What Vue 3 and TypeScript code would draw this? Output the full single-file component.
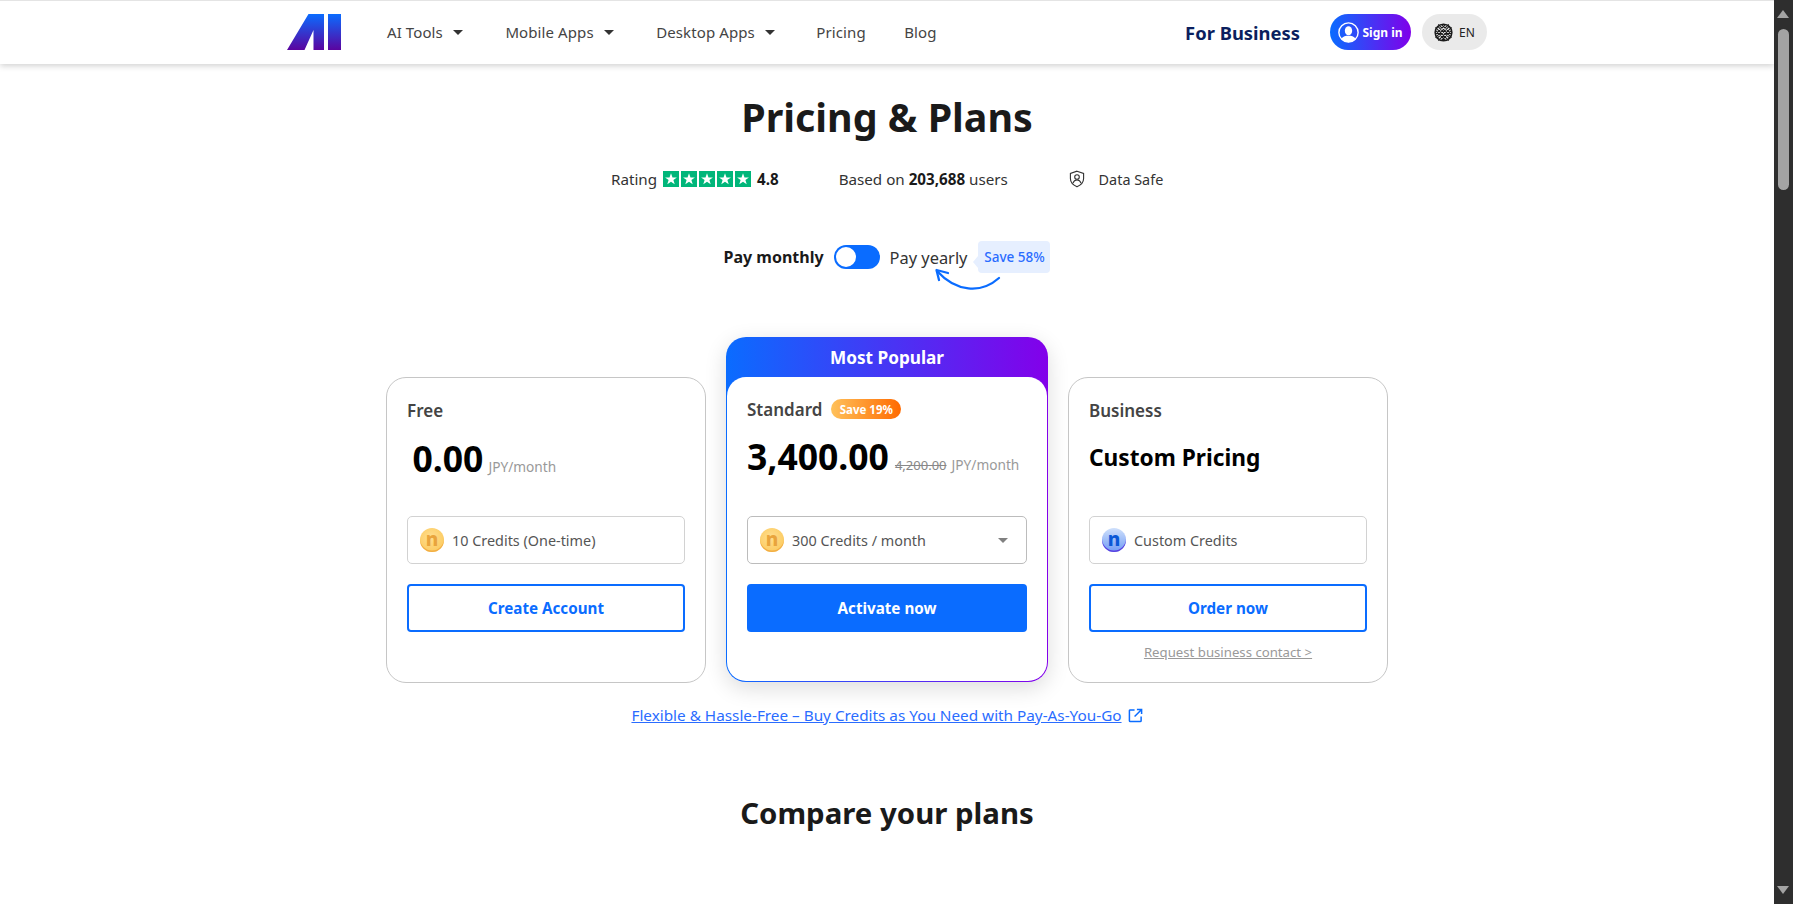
<script setup lang="ts">
const navItems = [
  { label: 'AI Tools', caret: true },
  { label: 'Mobile Apps', caret: true },
  { label: 'Desktop Apps', caret: true },
  { label: 'Pricing', caret: false },
  { label: 'Blog', caret: false },
]
const stars = [0, 1, 2, 3, 4]
</script>

<template>
  <div class="page">
    <div class="viewport">
      <header class="topbar">
        <div class="topbar-inner">
          <svg class="logo" viewBox="0 0 54 36" aria-label="AI">
            <defs>
              <linearGradient id="logoFill" x1="0" y1="0" x2="0" y2="1">
                <stop offset="0" stop-color="#0a6cff" />
                <stop offset="1" stop-color="#5b049f" />
              </linearGradient>
            </defs>
            <path d="M0 36 L21.500 0 H37 V36 H26.500 V16 L17.500 36 Z" fill="url(#logoFill)" />
            <rect x="41" y="0" width="13" height="36" fill="url(#logoFill)" />
          </svg>
          <nav class="nav">
            <a v-for="item in navItems" :key="item.label" class="nav-link">
              {{ item.label }}<i v-if="item.caret" class="caret"></i>
            </a>
          </nav>
          <a class="business">For Business</a>
          <button class="signin">
            <svg class="user" viewBox="0 0 24 24">
              <circle cx="12" cy="12" r="11" fill="none" stroke="#fff" stroke-width="1.6" />
              <ellipse cx="12" cy="10" rx="4.200" ry="5.200" fill="#fff" />
              <path d="M3.800 19.200c2-3.200 5-3.600 8.200-3.600s6.200.4 8.200 3.600A11 11 0 0 1 12 23a11 11 0 0 1-8.200-3.800z" fill="#fff" />
            </svg>
            Sign in
          </button>
          <button class="lang">
            <svg class="globe" viewBox="0 0 20 20" fill="none" stroke="#1a1a1a">
              <circle cx="10" cy="10" r="8.800" stroke-width="1.600" />
              <path d="M4 3.500 17 16.500M1.800 8 12 18.400M8 1.600 18.400 12M1.500 4.500 15.500 18.500M4.500 1.500 18.500 15.500M16 3.500 3 16.500M18.200 8 8 18.400M12 1.600 1.600 12M18.500 4.500 4.500 18.500M15.500 1.500 1.500 15.500" stroke-width="1.100" />
            </svg>
            EN
          </button>
        </div>
      </header>

      <main class="content">
        <h1 class="title">Pricing &amp; Plans</h1>

        <div class="stats">
          <div class="stat rating">
            Rating
            <span class="stars">
              <span v-for="s in stars" :key="s" class="star">
                <svg viewBox="0 0 16 16"><path d="M8 2.200 9.500 6.400h4.400L10.400 9l1.300 4.300L8 10.700l-3.700 2.600L5.600 9 2.100 6.400h4.400z" fill="#fff" /></svg>
              </span>
            </span>
            <b>4.8</b>
          </div>
          <div class="stat based">Based on <b>203,688</b> users</div>
          <div class="stat safe">
            <svg class="shield" viewBox="0 0 18 18" fill="none" stroke="#333" stroke-width="1.100">
              <path d="M9 1.200 15.600 3.400V8.600c0 3.700-2.800 6.600-6.600 8.200-3.800-1.600-6.600-4.500-6.600-8.200V3.400z" />
              <circle cx="9" cy="7" r="2.300" />
              <path d="M5 13c.7-2 2.200-3 4-3s3.300 1 4 3" />
            </svg>
            Data Safe
          </div>
        </div>

        <div class="billing">
          <span class="pay-on">Pay monthly</span>
          <span class="toggle"><span class="knob"></span></span>
          <span class="pay-off">Pay yearly</span>
          <span class="save">Save 58%</span>
          <svg class="swoop" viewBox="0 0 70 27" fill="none" stroke="#0a6cff" stroke-width="2.300" stroke-linecap="round" stroke-linejoin="round">
            <path d="M68 13C50 29 25 27 6 6" />
            <path d="M8 15 5.500 5 17 8" />
          </svg>
        </div>

        <section class="plans">
          <article class="plan">
            <div class="plan-head"><h2 class="plan-name">Free</h2></div>
            <div class="price-row free-price"><span class="amount">0.00</span><span class="unit">JPY/month</span></div>
            <div class="credits">
              <span class="coin coin-gold">n</span>
              <span>10 Credits (One-time)</span>
            </div>
            <button class="cta cta-line">Create Account</button>
          </article>

          <article class="plan plan-featured">
            <div class="ribbon">Most Popular</div>
            <div class="featured-body">
              <div class="plan-head"><h2 class="plan-name">Standard</h2><span class="badge">Save 19%</span></div>
              <div class="price-row featured-price"><span class="amount">3,400.00</span><s class="was">4,200.00</s><span class="unit">JPY/month</span></div>
              <div class="credits credits-select">
                <span class="coin coin-gold">n</span>
                <span>300 Credits / month</span>
                <i class="select-caret"></i>
              </div>
              <button class="cta cta-solid">Activate now</button>
            </div>
          </article>

          <article class="plan">
            <div class="plan-head"><h2 class="plan-name">Business</h2></div>
            <div class="price-row custom-price">Custom Pricing</div>
            <div class="credits">
              <span class="coin coin-blue">n</span>
              <span>Custom Credits</span>
            </div>
            <button class="cta cta-line">Order now</button>
            <a class="contact">Request business contact &gt;</a>
          </article>
        </section>

        <a class="paygo">
          <span class="paygo-text">Flexible &amp; Hassle-Free – Buy Credits as You Need with Pay-As-You-Go</span>
          <svg class="ext" viewBox="0 0 16 16" fill="none" stroke="#0a6cff" stroke-width="1.600">
            <path d="M7 2H2.500A1 1 0 0 0 1.500 3v10.500a1 1 0 0 0 1 1H13a1 1 0 0 0 1-1V9" />
            <path d="M9.500 1.500h5v5M14.500 1.500 7 9" />
          </svg>
        </a>

        <h2 class="compare">Compare your plans</h2>
      </main>
    </div>

    <aside class="scrollbar">
      <span class="arrow-up"></span>
      <span class="thumb"></span>
      <span class="arrow-down"></span>
    </aside>
  </div>
</template>

<style>
html, body { margin: 0; padding: 0; background: #fff; overflow: hidden; }
</style>

<style scoped>
.page {
  display: flex;
  height: 904px;
  overflow: hidden;
  font-family: "Noto Sans", "Open Sans", "Liberation Sans", sans-serif;
  color: #1a1a1a;
}
.viewport { flex: 1; min-width: 0; height: 904px; overflow: hidden; }

.topbar {
  height: 64px;
  box-sizing: border-box;
  border-top: 1px solid #e4e4e4;
  background: #fff;
  box-shadow: 0 2px 6px rgba(0, 0, 0, 0.18);
}
.topbar-inner {
  width: 1200px;
  height: 62px;
  margin: 0 auto;
  display: flex;
  align-items: center;
}
.logo { width: 54px; height: 36px; flex: none; }
.nav { display: flex; align-items: center; margin-left: 46px; gap: 42.5px; }
.nav-link {
  display: flex;
  align-items: center;
  font-size: 15px;
  letter-spacing: 0.1px;
  color: #444;
  white-space: nowrap;
}
.nav-link:nth-child(4) { margin-left: -1px; }
.nav-link:last-child { margin-left: -4px; }
.caret {
  width: 0;
  height: 0;
  margin-left: 10px;
  border-left: 5px solid transparent;
  border-right: 5px solid transparent;
  border-top: 5px solid #333;
}
.business {
  margin-left: auto;
  font-size: 18.4px;
  font-weight: 700;
  color: #0b1f5e;
  white-space: nowrap;
}
.signin {
  margin-left: 30px;
  width: 81px;
  height: 36px;
  padding: 0;
  border: 0;
  border-radius: 18px;
  display: flex;
  align-items: center;
  justify-content: center;
  gap: 3px;
  font: 700 12px "Noto Sans", sans-serif;
  color: #fff;
  background: linear-gradient(90deg, #0a6cff, #7f00ea);
}
.user { width: 21px; height: 21px; }
.lang {
  margin-left: 11px;
  width: 65px;
  height: 36px;
  padding: 0;
  border: 0;
  border-radius: 18px;
  display: flex;
  align-items: center;
  justify-content: center;
  gap: 6px;
  font: 400 12px "Noto Sans", sans-serif;
  color: #222;
  background: #eaeaea;
}
.globe { width: 19px; height: 19px; }

.content { display: flex; flex-direction: column; align-items: center; }
.title {
  margin: 26px 0 0;
  font-size: 39.4px;
  line-height: 54px;
  font-weight: 700;
  color: #1a1a1a;
}
.stats {
  margin-top: 23px;
  height: 24px;
  display: flex;
  align-items: center;
  gap: 60px;
  font-size: 15.2px;
  color: #333;
}
.stat { display: flex; align-items: center; white-space: pre; }
.stat b { color: #1a1a1a; }
.rating b { margin-left: 6px; }
.stars { display: flex; gap: 2px; margin-left: 2px; }
.star { width: 16px; height: 16px; background: #00b67a; display: block; }
.star svg { display: block; width: 100%; height: 100%; }
.safe { font-size: 14.4px; }
.shield { width: 18px; height: 18px; margin-right: 9px; }

.billing {
  position: relative;
  margin-top: 50px;
  height: 32px;
  display: flex;
  align-items: center;
}
.pay-on { font-size: 16px; font-weight: 700; color: #1a1a1a; }
.toggle {
  margin: 0 10px;
  width: 46px;
  height: 24px;
  box-sizing: border-box;
  padding: 2px;
  border-radius: 12px;
  background: #0a6cff;
}
.knob { display: block; width: 20px; height: 20px; border-radius: 50%; background: #fff; }
.pay-off { font-size: 16.4px; color: #333; }
.save {
  position: relative;
  margin-left: 11px;
  height: 32px;
  width: 72px;
  display: flex;
  align-items: center;
  justify-content: center;
  border-radius: 4px;
  background: #e6efff;
  color: #2a6cff;
  font-size: 13.5px;
  font-weight: 500;
}
.save::before {
  content: "";
  position: absolute;
  left: -5px;
  top: 15px;
  border-top: 6px solid transparent;
  border-bottom: 6px solid transparent;
  border-right: 5px solid #e6efff;
}
.swoop { position: absolute; left: 207px; top: 24px; width: 70px; height: 27px; }

.plans {
  margin-top: 64px;
  display: flex;
  align-items: flex-end;
  gap: 20px;
}
.plan {
  position: relative;
  width: 320px;
  height: 306px;
  box-sizing: border-box;
  padding: 20px 20px 0;
  border: 1px solid #c6c6c6;
  border-radius: 20px;
  background: #fff;
  display: flex;
  flex-direction: column;
}
.plan-head { height: 24px; display: flex; align-items: center; gap: 9px; }
.plan-name { margin: 0; font-size: 17px; font-weight: 600; color: #444; }
.badge {
  height: 20px;
  width: 70px;
  border-radius: 10px;
  display: flex;
  align-items: center;
  justify-content: center;
  font-size: 11.5px;
  font-weight: 700;
  color: #fff;
  background: linear-gradient(90deg, #ffc15a, #ff6a00);
}
.price-row {
  margin-top: 11px;
  height: 50px;
  display: flex;
  align-items: baseline;
  white-space: nowrap;
}
.featured-price { margin-top: 10px; }
.free-price { padding-left: 5.5px; }
.amount { font-size: 35.5px; line-height: 50px; font-weight: 700; color: #000; }
.unit, .was { font-size: 13.7px; color: #999; }
.amount + .unit { margin-left: 5px; }
.amount + .was { margin-left: 6px; }
.was + .unit { margin-left: 5px; }
.was { font-size: 13px; color: #888; }
.custom-price { font-size: 22.7px; line-height: 50px; font-weight: 700; color: #000; }
.credits {
  margin-top: 33px;
  width: 100%;
  height: 48px;
  box-sizing: border-box;
  padding: 0 12px;
  display: flex;
  align-items: center;
  gap: 8px;
  border: 1px solid #d2d2d2;
  border-radius: 5px;
  font-size: 14.4px;
  color: #555;
  white-space: nowrap;
}
.credits-select { border-color: #bcbcbc; margin-top: 35px; }
.coin {
  width: 24px;
  height: 24px;
  flex: none;
  box-sizing: border-box;
  padding-bottom: 2px;
  border-radius: 50%;
  display: flex;
  align-items: center;
  justify-content: center;
  font-size: 19px;
  line-height: 1;
  font-weight: 800;
}
.coin-gold {
  color: #e9a43c;
  background: radial-gradient(circle at 45% 40%, #ffdf91, #fbc450);
  box-shadow: inset 0 -1.5px 0 #f2ae45;
}
.coin-blue {
  color: #0a57d6;
  background: linear-gradient(180deg, #cfe0fb, #6f9bf5);
  box-shadow: inset 0 -1.5px 0 #5a3fe0;
}
.select-caret {
  margin-left: auto;
  margin-right: 6px;
  border-left: 5.5px solid transparent;
  border-right: 5.5px solid transparent;
  border-top: 5.5px solid #808080;
}
.cta {
  margin-top: 20px;
  width: 100%;
  height: 48px;
  box-sizing: border-box;
  border-radius: 4px;
  font: 700 15.2px "Noto Sans", sans-serif;
  flex: none;
}
.cta-line { background: #fff; border: 2px solid #0a6cff; color: #0a6cff; }
.cta-solid { background: #0a6cff; border: 0; color: #fff; }
.contact {
  margin-top: 11px;
  align-self: center;
  font-size: 13.2px;
  color: #999;
  text-decoration: underline;
}
.plan-featured {
  width: 322px;
  height: 345px;
  margin-bottom: 1px;
  padding: 1px;
  border: 0;
  background: linear-gradient(90deg, #0a6cff, #8300ea);
  box-shadow: 0 6px 22px rgba(0, 0, 0, 0.14);
}
.ribbon {
  height: 39px;
  flex: none;
  display: flex;
  align-items: center;
  justify-content: center;
  font-size: 17.2px;
  font-weight: 700;
  color: #fff;
}
.featured-body {
  flex: 1;
  padding: 20px 20px 0;
  border-radius: 19px;
  background: #fff;
  display: flex;
  flex-direction: column;
}
.paygo {
  margin-top: 20px;
  display: flex;
  align-items: center;
  gap: 6px;
  height: 24px;
}
.paygo-text { font-size: 15.3px; color: #2a6cff; text-decoration: underline; white-space: nowrap; }
.ext { width: 15px; height: 15px; }
.compare {
  margin: 64px 0 0;
  font-size: 29.4px;
  line-height: 44px;
  font-weight: 700;
  color: #1a1a1a;
}

.scrollbar {
  width: 19px;
  flex: none;
  height: 904px;
  background: #2e2e2e;
  position: relative;
}
.arrow-up, .arrow-down {
  position: absolute;
  left: 3px;
  width: 0;
  height: 0;
  border-left: 6.5px solid transparent;
  border-right: 6.5px solid transparent;
}
.arrow-up { top: 10px; border-bottom: 8px solid #a3a3a3; }
.arrow-down { bottom: 10px; border-top: 8px solid #a3a3a3; }
.thumb {
  position: absolute;
  left: 4px;
  top: 29px;
  width: 11px;
  height: 161px;
  border-radius: 6px;
  background: #a3a3a3;
}
</style>
